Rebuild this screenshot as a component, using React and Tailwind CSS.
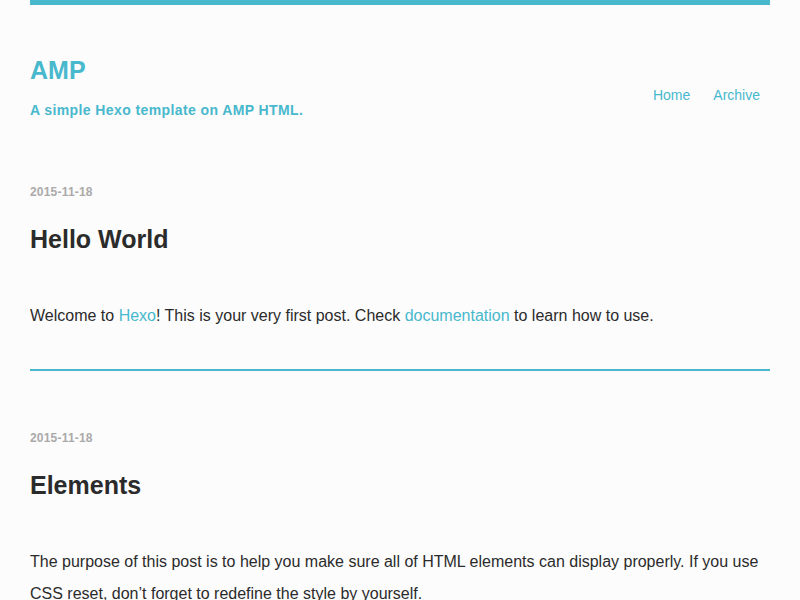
import React from "react";

const posts = [
  {
    date: "2015-11-18",
    title: "Hello World",
    body: (
      <>
        Welcome to <a className="text-[#48b8cd]">Hexo</a>! This is your very first post. Check{" "}
        <a className="text-[#48b8cd]">documentation</a> to learn how to use.
      </>
    ),
  },
  {
    date: "2015-11-18",
    title: "Elements",
    body: (
      <>
        The purpose of this post is to help you make sure all of HTML elements can display properly. If you use
        CSS reset, don’t forget to redefine the style by yourself.
      </>
    ),
  },
];

const Post = ({ post }) => {
  return (
    <article className="pt-[59px] pb-[37px] border-b-2 border-[#48b8cd] first:pt-[64px]">
      <div className="text-[12px] leading-[16px] font-bold tracking-[0.2px] text-[#aaaaaa]">{post.date}</div>
      <h2 className="mt-[23px] text-[25px] leading-[32px] font-bold text-[#2b2b2b]">{post.title}</h2>
      <p className="mt-[45px] text-[16px] leading-[32px] text-[#2b2b2b]">{post.body}</p>
    </article>
  );
};

export default function App() {
  return (
    <div className="min-h-screen bg-[#fcfcfc] font-['Liberation_Sans',Arial,sans-serif] overflow-hidden h-[600px]">
      <div className="mx-[30px]">
        <div className="h-[5px] bg-[#48b8cd]" />
        <header className="flex justify-between items-start pt-[50px]">
          <div>
            <h1 className="text-[25px] leading-[30px] font-bold text-[#48b8cd]">AMP</h1>
            <div className="mt-[15px] text-[14px] leading-[20px] font-bold tracking-[0.4px] text-[#48b8cd]">
              A simple Hexo template on AMP HTML.
            </div>
          </div>
          <nav className="mt-[30px] flex gap-[3px] text-[14px] leading-[20px] text-[#48b8cd]">
            <a className="px-[10px]">Home</a>
            <a className="px-[10px]">Archive</a>
          </nav>
        </header>
        <main>
          {posts.map((post, i) => (
            <Post key={i} post={post} />
          ))}
        </main>
      </div>
    </div>
  );
}
